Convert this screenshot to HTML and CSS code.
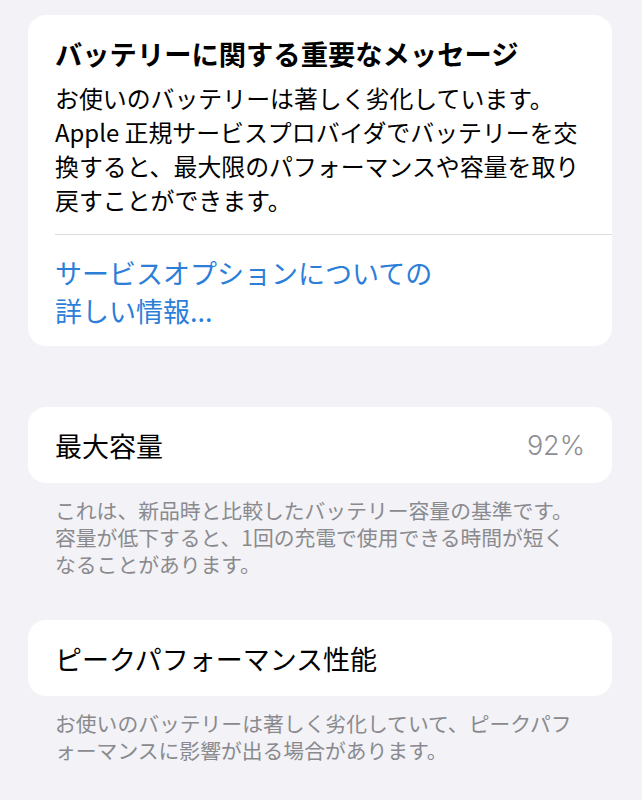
FILE: index.html
```html
<!DOCTYPE html>
<html lang="ja">
<head>
<meta charset="utf-8">
<title>バッテリーの状態</title>
<link rel="stylesheet" href="styles.css">
</head>

<body>
<div class="page">
  <!-- warning card -->
  <div class="card notice">
    <div class="notice-body">
      <h1 class="notice-title">バッテリーに関する重要なメッセージ</h1>
      <p class="notice-text">
        お使いのバッテリーは著しく劣化しています。<br>
        Apple 正規サービスプロバイダでバッテリーを交<br>
        換すると、最大限のパフォーマンスや容量を取り<br>
        戻すことができます。
      </p>
    </div>
    <a class="notice-link" href="#">サービスオプションについての<br>詳しい情報...</a>
  </div>

  <!-- maximum capacity -->
  <div class="card row">
    <span class="row-label">最大容量</span>
    <span class="row-value">92%</span>
  </div>
  <p class="footnote">
    これは、新品時と比較したバッテリー容量の基準です。<br>
    容量が低下すると、1回の充電で使用できる時間が短く<br>
    なることがあります。
  </p>

  <!-- peak performance -->
  <div class="card row second">
    <span class="row-label">ピークパフォーマンス性能</span>
  </div>
  <p class="footnote">
    お使いのバッテリーは著しく劣化していて、ピークパフ<br>
    ォーマンスに影響が出る場合があります。
  </p>
</div>
</body>
</html>
```

FILE: styles.css
```css
body {
  margin: 0;
  background: #f2f2f7;
  font-family: "Noto Sans CJK JP", "Noto Sans", sans-serif;
  color: #000;
}

.page {
  padding: 15px 30px 0 28px;
}

.card {
  background: #fff;
  border-radius: 18px;
}

/* warning card */
.notice {padding: 20px 0 16px 27px;}
.notice-body {
  padding-right: 16px;
  padding-bottom: 17px;
  border-bottom: 1px solid #dcdce0;
}
.notice-title {
  margin: 0;
  font-size: 27.3px;
  font-weight: 700;
  line-height: 36px;
}
.notice-text {
  margin: 10px 0 0 0;
  font-size: 23.9px;
  line-height: 34px;
}
.notice-link {
  display: block;
  margin-top: 19px;
  font-size: 27px;
  line-height: 38px;
  color: #2c7ed8;
  text-decoration: none;
}

/* list rows */
.row {
  display: flex;
  align-items: center;
  justify-content: space-between;
  height: 76px;
  margin-top: 61px;
  padding: 0 27px;
}
.row.second {margin-top: 42px;}
.row-label {font-size: 27px;}
.row-value {
  font-family: "Inter", "Noto Sans", sans-serif;
  font-size: 27px;
  font-weight: 300;
  color: #8e8e93;
}

.footnote {
  margin: 14px 0 0 0;
  padding-left: 27px;
  font-size: 20.8px;
  line-height: 27px;
  color: #8a8a8e;
}
```
